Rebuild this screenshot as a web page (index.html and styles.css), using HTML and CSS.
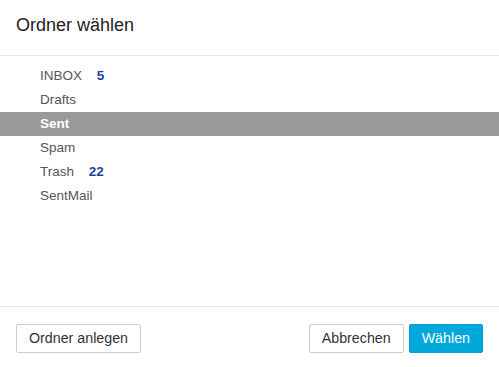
FILE: index.html
```html
<!DOCTYPE html>
<html lang="de">
<head>
    <meta charset="UTF-8">
    <title>Ordner wählen</title>
    <link rel="stylesheet" href="styles.css">
</head>
<body>
    <div class="dialog">
        <div class="dialog-header">
            <h4 class="dialog-title">Ordner wählen</h4>
        </div>
        <div class="dialog-body">
            <ul class="folder-list">
                <li class="folder">INBOX <span class="count">5</span></li>
                <li class="folder">Drafts</li>
                <li class="folder selected">Sent</li>
                <li class="folder">Spam</li>
                <li class="folder">Trash <span class="count">22</span></li>
                <li class="folder">SentMail</li>
            </ul>
        </div>
        <div class="dialog-footer">
            <button class="btn">Ordner anlegen</button>
            <div class="right">
                <button class="btn">Abbrechen</button>
                <button class="btn btn-primary">Wählen</button>
            </div>
        </div>
    </div>
</body>
</html>
```

FILE: styles.css
```css
html, body {
    margin: 0;
    padding: 0;
    background: #fff;
}
body {
    font-family: "Liberation Sans", Arial, sans-serif;
    color: #333;
}
.dialog {
    width: 499px;
    height: 367px;
    display: flex;
    flex-direction: column;
}
.dialog-header {
    height: 55px;
    border-bottom: 1px solid #e5e5e5;
    padding: 0 16px;
    display: flex;
    align-items: center;
}
.dialog-title {
    margin: 0;
    font-size: 18px;
    font-weight: normal;
    color: #222;
    position: relative;
    top: -2px;
}
.dialog-body {
    flex: 1;
    padding-top: 8px;
}
.folder-list {
    list-style: none;
    margin: 0;
    padding: 0;
}
.folder {
    height: 24px;
    line-height: 24px;
    padding-left: 40px;
    font-size: 13.5px;
    color: #555;
}
.folder.selected {
    background: #999;
    color: #fff;
    font-weight: bold;
}
.count {
    margin-left: 11px;
    font-weight: bold;
    color: #1d3f9c;
}
.dialog-footer {
    height: 61px;
    border-top: 1px solid #e5e5e5;
    padding: 17px 16px 0;
    box-sizing: border-box;
    display: flex;
    justify-content: space-between;
    align-items: flex-start;
}
.right {
    display: flex;
    gap: 5px;
}
.btn {
    font-family: inherit;
    font-size: 14.25px;
    line-height: 17px;
    padding: 5px 12px;
    border: 1px solid #ccc;
    border-radius: 2px;
    background: #fff;
    color: #333;
    margin: 0;
}
.btn-primary {
    background: #00a8dc;
    border-color: #00a0d2;
    color: #fff;
}
```
